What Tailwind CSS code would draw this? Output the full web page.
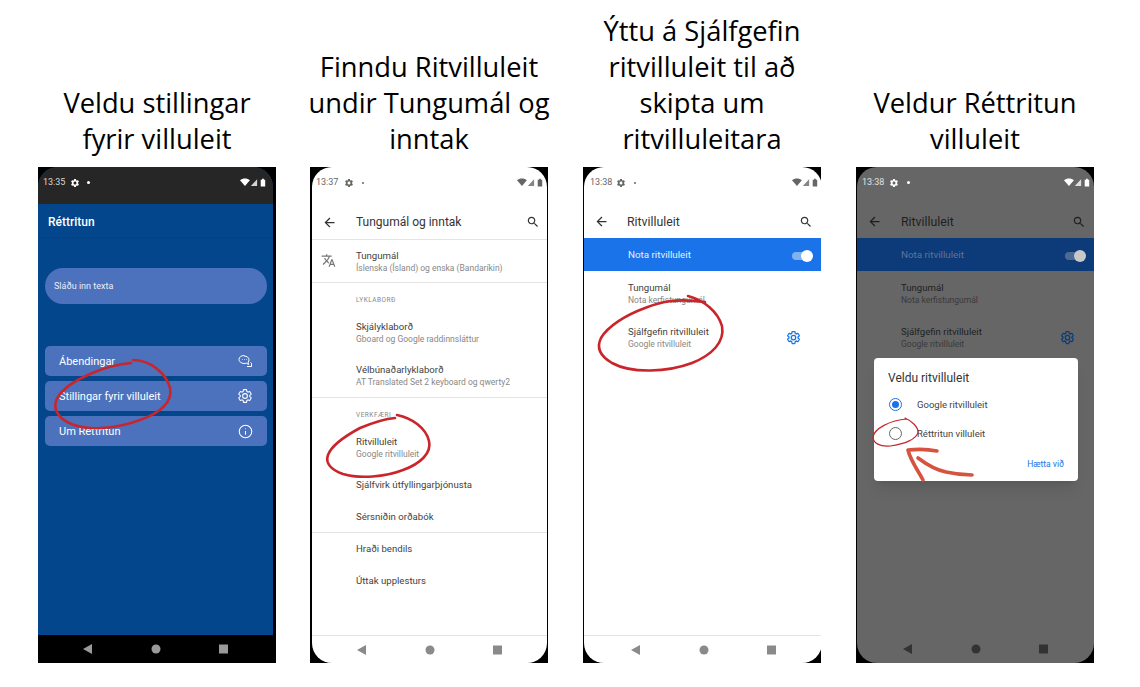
<!DOCTYPE html>
<html lang="en">

<head>
  <meta charset="UTF-8">
  <meta name="viewport" content="width=device-width, initial-scale=1.0">
  <title>Réttritun leiðbeiningar</title>
  <script src="https://cdn.jsdelivr.net/npm/@tailwindcss/browser@4"></script>
</head>

<body class="bg-white font-['Roboto',sans-serif]">
  <!-- shared icons -->
  <svg class="hidden">
    <symbol id="gear" viewBox="0 0 24 24"><path d="M19.14 12.94c.04-.3.06-.61.06-.94 0-.32-.02-.64-.07-.94l2.03-1.58a.49.49 0 0 0 .12-.61l-1.92-3.32a.488.488 0 0 0-.59-.22l-2.39.96c-.5-.38-1.03-.7-1.62-.94l-.36-2.54a.484.484 0 0 0-.48-.41h-3.84c-.24 0-.43.17-.47.41l-.36 2.54c-.59.24-1.13.57-1.62.94l-2.39-.96c-.22-.08-.47 0-.59.22L2.74 8.87c-.12.21-.08.47.12.61l2.03 1.58c-.05.3-.09.63-.09.94s.02.64.07.94l-2.03 1.58a.49.49 0 0 0-.12.61l1.92 3.32c.12.22.37.29.59.22l2.39-.96c.5.38 1.03.7 1.62.94l.36 2.54c.05.24.24.41.48.41h3.84c.24 0 .44-.17.47-.41l.36-2.54c.59-.24 1.13-.56 1.62-.94l2.39.96c.22.08.47 0 .59-.22l1.92-3.32c.12-.22.07-.47-.12-.61l-2.01-1.58zM12 15.6c-1.98 0-3.6-1.62-3.6-3.6s1.62-3.6 3.6-3.6 3.6 1.62 3.6 3.6-1.62 3.6-3.6 3.6z"/></symbol>
    <symbol id="back" viewBox="0 0 24 24"><path d="M20 11H7.83l5.59-5.59L12 4l-8 8 8 8 1.41-1.41L7.83 13H20v-2z"/></symbol>
    <symbol id="search" viewBox="0 0 24 24"><path d="M15.5 14h-.79l-.28-.27C15.41 12.59 16 11.11 16 9.5 16 5.91 13.09 3 9.5 3S3 5.91 3 9.5 5.91 16 9.5 16c1.61 0 3.09-.59 4.23-1.57l.27.28v.79l5 4.99L20.49 19l-4.99-5zm-6 0C7.01 14 5 11.99 5 9.5S7.01 5 9.5 5 14 7.01 14 9.5 11.99 14 9.5 14z"/></symbol>
    <symbol id="translate" viewBox="0 0 24 24"><path d="M12.87 15.07l-2.54-2.51.03-.03c1.74-1.94 2.98-4.17 3.71-6.53H17V4h-7V2H8v2H1v1.99h11.17C11.5 7.92 10.44 9.75 9 11.35 8.07 10.32 7.3 9.19 6.69 8h-2c.73 1.63 1.73 3.17 2.98 4.56l-5.09 5.02L4 19l5-5 3.11 3.11.76-2.04zM18.5 10h-2L12 22h2l1.12-3h4.75L21 22h2l-4.5-12zm-2.62 7l1.62-4.33L19.12 17h-3.24z"/></symbol>
    <symbol id="status-icons" viewBox="0 0 30 10"><path d="M5.5 9L0 2.6C1.5 1.3 3.4.6 5.5.6s4 .7 5.500 2z"/><path d="M19 9V1.500L12 9z" opacity=".8"/><path d="M23 2h1.500V.8h2V2H28v7.500h-5z"/></symbol>
    <symbol id="nav-icons" viewBox="0 0 145 10"><path d="M0 5L9 0v10z"/><circle cx="73" cy="5" r="4.500"/><rect x="136" y=".5" width="9" height="9"/></symbol>
  </svg>

  <main class="flex gap-[34px] pl-[38px] w-[1140px] h-[687px] overflow-hidden">

    <!-- step 1 -->
    <section class="w-[238px] shrink-0">
      <h2 class="h-[167px] pb-[10px] flex items-end justify-center text-center text-[27.300px] leading-[36px] text-black whitespace-nowrap font-['Open_Sans',sans-serif]">Veldu stillingar<br>fyrir villuleit</h2>
      <div class="relative h-[496px] bg-black overflow-hidden">
        <div class="h-full w-[235px] rounded-t-[20px] overflow-hidden flex flex-col bg-[#03468c]">
          <div class="h-[37px] bg-[#262626] flex items-center pl-[5px] pr-[6px] pb-[6px] shrink-0 text-white">
            <span class="text-[9px] text-[#d8d8d8]">13:35</span>
            <svg class="w-[10px] h-[10px] ml-[5px] fill-white"><use href="#gear"/></svg>
            <span class="w-[3px] h-[3px] rounded-full bg-white ml-[7px]"></span>
            <svg class="w-[27px] h-[9px] ml-auto fill-white"><use href="#status-icons"/></svg>
          </div>
          <div class="h-[34px] flex items-center pl-[10px] pt-[3px] border-b border-[#034283] text-white text-[12px] font-medium shrink-0">Réttritun</div>
          <div class="ml-[7px] mr-[6px] mt-[30px] h-[36px] rounded-[18px] bg-[#4c72be] flex items-center pl-[9px] pt-[1px] text-[9px] text-[#e8edf7]">Sláðu inn texta</div>
          <div class="ml-[7px] mr-[6px] mt-[42px] flex flex-col gap-[5px]">
            <div class="h-[30px] rounded-[5px] bg-[#4c72be] flex items-center justify-between pl-[14px] pr-[14px] text-[11px] text-white"><span class="mt-[2px]">Ábendingar</span>
              <svg class="w-[15px] h-[15px] fill-none stroke-white" viewBox="0 0 15 15" stroke-width="1"><path d="M6 1.500C3.200 1.500 1 3.200 1 5.400c0 1.200.6 2.200 1.500 2.900 1 .8 2.200 1.200 3.500 1.200.8 0 1.500-.1 2.200-.4l2.300 1.400-.4-2.400c.6-.7.900-1.500.9-2.300 0-2.200-2.200-3.800-5-3.800z"/><path d="M12.500 8.500l1 .8v3.200h-4.500"/><path d="M4 5.500h.6M6 5.500h.6M8 5.500h.6"/></svg>
            </div>
            <div class="h-[30px] rounded-[5px] bg-[#4c72be] flex items-center justify-between pl-[14px] pr-[14px] text-[11px] text-white"><span class="mt-[2px]">Stillingar fyrir villuleit</span>
              <svg class="w-[16px] h-[16px] fill-none stroke-white" stroke-width="1.600"><use href="#gear"/></svg>
            </div>
            <div class="h-[30px] rounded-[5px] bg-[#4c72be] flex items-center justify-between pl-[14px] pr-[14px] text-[11px] text-white"><span class="mt-[2px]">Um Réttritun</span>
              <svg class="w-[15px] h-[15px] fill-none stroke-white" viewBox="0 0 24 24" stroke-width="1.700"><circle cx="12" cy="12" r="10"/><path d="M12 11v6M12 7v1.500"/></svg>
            </div>
          </div>
          <div class="mt-auto h-[28px] bg-black flex items-center justify-center shrink-0">
            <svg class="w-[145px] h-[10px] fill-[#9a9a9a]"><use href="#nav-icons"/></svg>
          </div>
        </div>
        <svg class="absolute inset-0 w-full h-full fill-none stroke-[#c9252b]" viewBox="38 167 238 496" stroke-width="2.600" stroke-linecap="round">
          <path d="M133 360C150 360 166 373 170 388C173 402 160 413 140 420C118 428 92 431 74 425C60 420 53 411 56 401C60 390 74 381 90 374C104 368 118 364 131 363"/>
        </svg>
      </div>
    </section>

    <!-- step 2 -->
    <section class="w-[238px] shrink-0">
      <h2 class="h-[167px] pb-[10px] flex items-end justify-center text-center text-[27.300px] leading-[36px] text-black whitespace-nowrap font-['Open_Sans',sans-serif]">Finndu Ritvilluleit<br>undir Tungumál og<br>inntak</h2>
      <div class="relative h-[496px] bg-black overflow-hidden">
        <div class="h-full ml-[2px] mr-px rounded-[20px] overflow-hidden flex flex-col bg-white">
          <div class="h-[38px] flex items-center pl-[4px] pr-[3px] pb-[7px] shrink-0">
            <span class="text-[9px] text-[#666]">13:37</span>
            <svg class="w-[10px] h-[10px] ml-[6px] fill-[#666]"><use href="#gear"/></svg>
            <span class="w-[2px] h-[2px] rounded-full bg-[#666] ml-[8px]"></span>
            <svg class="w-[27px] h-[9px] ml-auto fill-[#666]"><use href="#status-icons"/></svg>
          </div>
          <div class="h-[35px] flex items-center border-b border-[#e4e4e4] shrink-0">
            <svg class="w-[15px] h-[15px] ml-[10px] fill-[#333]"><use href="#back"/></svg>
            <span class="ml-[19px] text-[12px] text-[#333]">Tungumál og inntak</span>
            <svg class="w-[14px] h-[14px] ml-auto mr-[7px] fill-[#333]"><use href="#search"/></svg>
          </div>
          <div class="h-[43px] flex items-center border-b border-[#e4e4e4] shrink-0 relative">
            <svg class="absolute left-[9px] top-[13px] w-[15px] h-[15px] fill-[#777]"><use href="#translate"/></svg>
            <div class="pl-[44px]">
              <p class="text-[9.600px] leading-[13px] text-[#3f3f3f]">Tungumál</p>
              <p class="text-[8.500px] leading-[12px] text-[#888]">Íslenska (Ísland) og enska (Bandaríkin)</p>
            </div>
          </div>
          <p class="h-[27px] pt-[13px] pl-[44px] text-[6.500px] leading-[9px] tracking-[.5px] text-[#888] shrink-0">LYKLABORÐ</p>
          <div class="h-[44px] flex flex-col justify-center pl-[44px] shrink-0">
            <p class="text-[9.600px] leading-[13px] text-[#3f3f3f]">Skjályklaborð</p>
            <p class="text-[8.500px] leading-[12px] text-[#888]">Gboard og Google raddinnsláttur</p>
          </div>
          <div class="h-[44px] flex flex-col justify-center pl-[44px] border-b border-[#e4e4e4] shrink-0">
            <p class="text-[9.600px] leading-[13px] text-[#3f3f3f]">Vélbúnaðarlyklaborð</p>
            <p class="text-[8.500px] leading-[12px] text-[#888]">AT Translated Set 2 keyboard og qwerty2</p>
          </div>
          <p class="h-[27px] pt-[13px] pl-[44px] text-[6.500px] leading-[9px] tracking-[.5px] text-[#888] shrink-0">VERKFÆRI</p>
          <div class="h-[44px] flex flex-col justify-center pl-[44px] shrink-0">
            <p class="text-[9.600px] leading-[13px] text-[#3f3f3f]">Ritvilluleit</p>
            <p class="text-[8.500px] leading-[12px] text-[#888]">Google ritvilluleit</p>
          </div>
          <div class="h-[32px] flex items-center pl-[44px] text-[9.600px] text-[#3f3f3f] shrink-0">Sjálfvirk útfyllingarþjónusta</div>
          <div class="h-[32px] flex items-center pl-[44px] pt-[2px] border-b border-[#e4e4e4] text-[9.600px] text-[#3f3f3f] shrink-0">Sérsniðin orðabók</div>
          <div class="h-[32px] flex items-center pl-[44px] text-[9.600px] text-[#3f3f3f] shrink-0">Hraði bendils</div>
          <div class="h-[32px] flex items-center pl-[44px] text-[9.600px] text-[#3f3f3f] shrink-0">Úttak upplesturs</div>
          <div class="mt-auto h-[28px] border-t border-[#e4e4e4] flex items-center justify-center shrink-0">
            <svg class="w-[145px] h-[10px] fill-[#8a8a8a]"><use href="#nav-icons"/></svg>
          </div>
        </div>
        <svg class="absolute inset-0 w-full h-full fill-none stroke-[#c9252b]" viewBox="310 167 238 496" stroke-width="2.600" stroke-linecap="round">
          <path d="M397 415C412 418 426 428 429 441C432 453 420 464 403 470C385 477 360 479 343 474C331 470 325 463 328 455C332 444 347 435 360 428C372 423 384 419 395 418"/>
        </svg>
      </div>
    </section>

    <!-- step 3 -->
    <section class="w-[238px] shrink-0 ml-px">
      <h2 class="h-[167px] pb-[10px] flex items-end justify-center text-center text-[27.300px] leading-[36px] text-black whitespace-nowrap font-['Open_Sans',sans-serif]">Ýttu á Sjálfgefin<br>ritvilluleit til að<br>skipta um<br>ritvilluleitara</h2>
      <div class="relative h-[496px] bg-black overflow-hidden">
        <div class="h-full ml-px -mr-px rounded-[20px] overflow-hidden flex flex-col bg-white">
          <div class="h-[38px] flex items-center pl-[6px] pr-[3px] pb-[7px] shrink-0">
            <span class="text-[9px] text-[#666]">13:38</span>
            <svg class="w-[10px] h-[10px] ml-[4px] fill-[#666]"><use href="#gear"/></svg>
            <span class="w-[2px] h-[2px] rounded-full bg-[#666] ml-[8px]"></span>
            <svg class="w-[27px] h-[9px] ml-auto fill-[#666]"><use href="#status-icons"/></svg>
          </div>
          <div class="h-[33px] flex items-center shrink-0">
            <svg class="w-[15px] h-[15px] ml-[10px] fill-[#333]"><use href="#back"/></svg>
            <span class="ml-[18px] mt-[2px] text-[12.300px] text-[#333]">Ritvilluleit</span>
            <svg class="w-[14px] h-[14px] ml-auto mr-[9px] fill-[#333]"><use href="#search"/></svg>
          </div>
          <div class="h-[33px] bg-[#1a73e8] flex items-center pl-[44px] pr-[10px] pt-[2px] text-[9.800px] text-[#e6f0fd] shrink-0">Nota ritvilluleit
            <span class="ml-auto relative w-[20px] h-[8px] rounded-full bg-[#7fb0f0]">
              <span class="absolute right-[-1px] top-[-2px] w-[12px] h-[12px] rounded-full bg-white"></span>
            </span>
          </div>
          <div class="h-[44px] flex flex-col justify-center pl-[44px] shrink-0">
            <p class="text-[9.600px] leading-[13px] text-[#3f3f3f]">Tungumál</p>
            <p class="text-[8.500px] leading-[12px] text-[#888]">Nota kerfistungumál</p>
          </div>
          <div class="h-[44px] flex items-center pl-[44px] pr-[21px] shrink-0">
            <div>
              <p class="text-[9.600px] leading-[13px] text-[#3f3f3f]">Sjálfgefin ritvilluleit</p>
              <p class="text-[8.500px] leading-[12px] text-[#888]">Google ritvilluleit</p>
            </div>
            <svg class="w-[15px] h-[15px] ml-auto fill-none stroke-[#1a73e8]" stroke-width="2"><use href="#gear"/></svg>
          </div>
          <div class="mt-auto h-[28px] border-t border-[#e4e4e4] flex items-center justify-center shrink-0">
            <svg class="w-[145px] h-[10px] fill-[#8a8a8a]"><use href="#nav-icons"/></svg>
          </div>
        </div>
        <svg class="absolute inset-0 w-full h-full fill-none stroke-[#c9252b]" viewBox="583 167 238 496" stroke-width="2.600" stroke-linecap="round">
          <path d="M688 296C704 300 718 312 722 326C725 342 712 355 692 363C668 372 632 374 612 363C600 356 596 348 601 338C608 326 626 315 645 308C660 302 675 298 705 302"/>
        </svg>
      </div>
    </section>

    <!-- step 4 -->
    <section class="w-[238px] shrink-0 ml-px">
      <h2 class="h-[167px] pb-[10px] flex items-end justify-center text-center text-[27.300px] leading-[36px] text-black whitespace-nowrap font-['Open_Sans',sans-serif]">Veldur Réttritun<br>villuleit</h2>
      <div class="relative h-[496px] bg-black overflow-hidden">
        <div class="h-full ml-px rounded-[20px] overflow-hidden flex flex-col bg-[#666666]">
          <div class="h-[38px] flex items-center pl-[5px] pr-[3px] pb-[7px] shrink-0">
            <span class="text-[9px] text-[#e0e0e0]">13:38</span>
            <svg class="w-[10px] h-[10px] ml-[5px] fill-white"><use href="#gear"/></svg>
            <span class="w-[3px] h-[3px] rounded-full bg-white ml-[8px]"></span>
            <svg class="w-[27px] h-[9px] ml-auto fill-white"><use href="#status-icons"/></svg>
          </div>
          <div class="h-[33px] flex items-center shrink-0">
            <svg class="w-[15px] h-[15px] ml-[10px] fill-[#1f1f1f]"><use href="#back"/></svg>
            <span class="ml-[19px] mt-[2px] text-[12.300px] text-[#1f1f1f]">Ritvilluleit</span>
            <svg class="w-[14px] h-[14px] ml-auto mr-[8px] fill-[#1f1f1f]"><use href="#search"/></svg>
          </div>
          <div class="h-[33px] bg-[#0d3a78] flex items-center pl-[44px] pr-[9px] pt-[2px] text-[9.800px] text-[#5e7596] shrink-0">Nota ritvilluleit
            <span class="ml-auto relative w-[20px] h-[8px] rounded-full bg-[#4d6a92]">
              <span class="absolute right-[-1px] top-[-2px] w-[12px] h-[12px] rounded-full bg-[#c8c8c8]"></span>
            </span>
          </div>
          <div class="h-[44px] flex flex-col justify-center pl-[44px] shrink-0">
            <p class="text-[9.600px] leading-[13px] text-[#1f1f1f]">Tungumál</p>
            <p class="text-[8.500px] leading-[12px] text-[#3a3a3a]">Nota kerfistungumál</p>
          </div>
          <div class="h-[44px] flex items-center pl-[44px] pr-[19px] shrink-0">
            <div>
              <p class="text-[9.600px] leading-[13px] text-[#1f1f1f]">Sjálfgefin ritvilluleit</p>
              <p class="text-[8.500px] leading-[12px] text-[#3a3a3a]">Google ritvilluleit</p>
            </div>
            <svg class="w-[15px] h-[15px] ml-auto fill-none stroke-[#0d3a78]" stroke-width="2"><use href="#gear"/></svg>
          </div>
          <div class="mt-auto h-[28px] flex items-center justify-center shrink-0">
            <svg class="w-[145px] h-[10px] fill-[#333]"><use href="#nav-icons"/></svg>
          </div>
        </div>

        <!-- dialog -->
        <div class="absolute left-[18px] top-[191px] w-[204px] h-[123px] bg-white rounded-[4px] shadow-lg">
          <p class="pl-[14px] pt-[13px] text-[12px] leading-[14px] text-[#333]">Veldu ritvilluleit</p>
          <div class="flex items-center h-[29px] mt-[5px] pl-[15px] text-[9.500px] text-[#444]">
            <span class="w-[13px] h-[13px] rounded-full border-[1.500px] border-[#1a73e8] flex items-center justify-center"><span class="w-[7px] h-[7px] rounded-full bg-[#1a73e8]"></span></span>
            <span class="ml-[15px] mt-[2px]">Google ritvilluleit</span>
          </div>
          <div class="flex items-center h-[29px] pl-[15px] text-[9.500px] text-[#444]">
            <span class="w-[13px] h-[13px] rounded-full border-[1.500px] border-[#666]"></span>
            <span class="ml-[15px] mt-[2px]">Réttritun villuleit</span>
          </div>
          <p class="absolute right-[14px] top-[100px] text-[8.500px] leading-[12px] text-[#1a73e8]">Hætta við</p>
        </div>

        <svg class="absolute inset-0 w-full h-full fill-none" viewBox="856 167 238 496" stroke-linecap="round" stroke-linejoin="round">
          <path d="M905 418C912 421 918 427 918 432C917 439 905 444 890 446C880 447 873 443 873 437C874 429 890 420 907 419" stroke="#c9252b" stroke-width="1.200"/>
          <path d="M937 451C927 449 918 449 908 450C911 462 918 470 923 480" stroke="#d6533f" stroke-width="3.600"/>
          <path d="M918 458C926 464 936 470 946 472C955 474 963 475 972 475" stroke="#d6533f" stroke-width="3.600"/>
        </svg>
      </div>
    </section>
  </main>
</body>

</html>
